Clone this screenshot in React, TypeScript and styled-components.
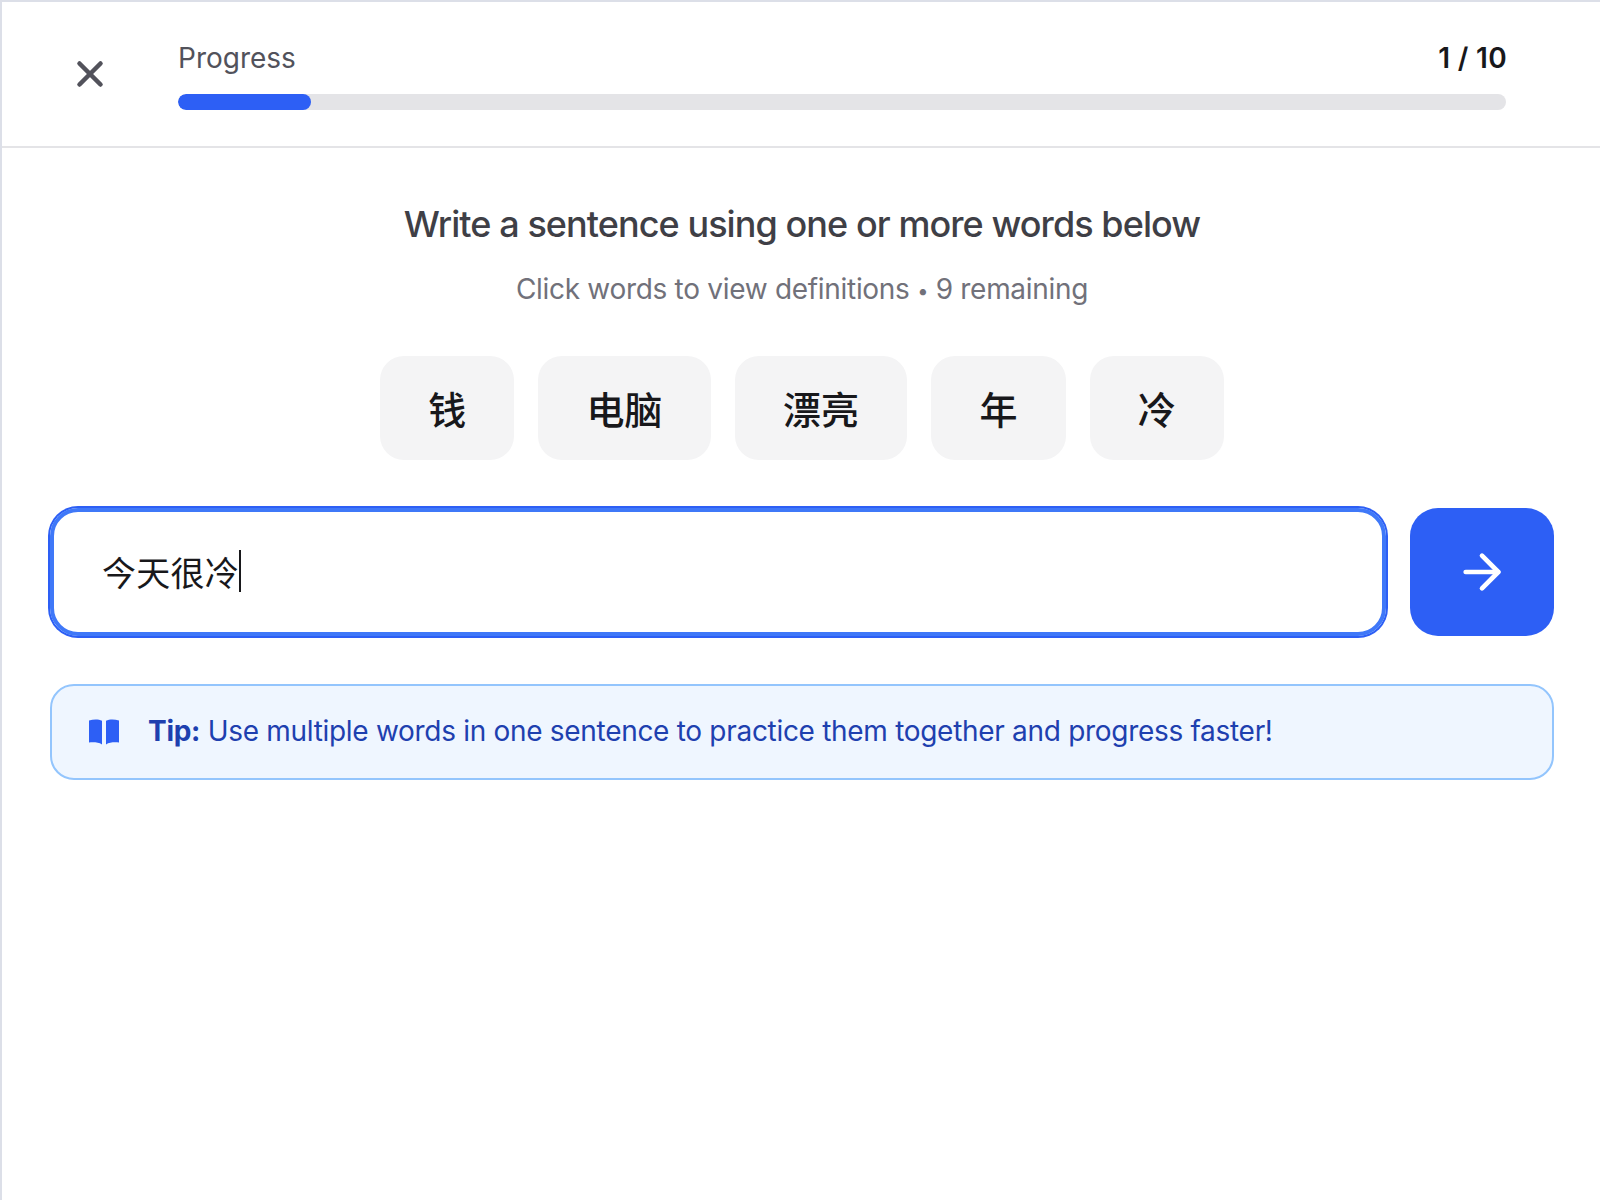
import { ArrowRight, X } from "lucide-react";
import styled, { createGlobalStyle } from "styled-components";

const words = ["钱", "电脑", "漂亮", "年", "冷"];

export default function App() {
    return (
        <Page>
            <GlobalStyle />
            <Header>
                <CloseButton aria-label="Close">
                    <X size={42} strokeWidth={2.6} />
                </CloseButton>
                <ProgressBlock>
                    <ProgressRow>
                        <ProgressLabel>Progress</ProgressLabel>
                        <ProgressCount>1 / 10</ProgressCount>
                    </ProgressRow>
                    <Track>
                        <Fill style={{ width: `${(1 / 10) * 100}%` }} />
                    </Track>
                </ProgressBlock>
            </Header>
            <Main>
                <Title>Write a sentence using one or more words below</Title>
                <Subtitle>Click words to view definitions <Dot>•</Dot> 9 remaining</Subtitle>
                <Chips>
                    {words.map((word) => (
                        <Chip key={word}>{word}</Chip>
                    ))}
                </Chips>
                <InputRow>
                    <Field>
                        今天很冷
                        <Caret />
                    </Field>
                    <SubmitButton aria-label="Submit">
                        <ArrowRight size={56} strokeWidth={2} />
                    </SubmitButton>
                </InputRow>
                <TipBox>
                    <BookIcon viewBox="0 0 30 26">
                        <path d="M0 1.6C4.5 .2 9.5 .2 13 1.8V25.4C9.5 23.4 4.5 23 0 23.6Z" />
                        <path d="M30 1.6C25.5 .2 20.5 .2 17 1.8V25.4C20.5 23.4 25.5 23 30 23.6Z" />
                    </BookIcon>
                    <TipText>
                        <strong>Tip:</strong> Use multiple words in one sentence to practice them together and progress faster!
                    </TipText>
                </TipBox>
            </Main>
        </Page>
    );
}

const GlobalStyle = createGlobalStyle`
body {
    margin: 0;
    background: #fff;
    font-family: Inter, "Noto Sans CJK SC", sans-serif;
}
`

const Page = styled.div`
box-sizing: border-box;
min-height: 1200px;
border-top: 2px solid #dcdfe8;
border-left: 2px solid #dcdfe8;
`

const Header = styled.header`
display: flex;
align-items: center;
padding: 36px 94px 36px 56px;
border-bottom: 2px solid #e4e4e7;
`

const CloseButton = styled.button`
display: flex;
align-items: center;
justify-content: center;
width: 64px;
height: 64px;
margin-right: 56px;
padding: 0;
border: none;
background: none;
color: #52525b;
`

const ProgressBlock = styled.div`
flex: 1;
display: flex;
flex-direction: column;
gap: 16px;
`

const ProgressRow = styled.div`
display: flex;
justify-content: space-between;
padding-top: 1px;
line-height: 39px;
font-size: 28px;
`

const ProgressLabel = styled.span`
color: #52525b;
`

const ProgressCount = styled.span`
margin-right: -1px;
color: #18181b;
font-weight: 600;
letter-spacing: 0.3px;
`

const Track = styled.div`
height: 16px;
border-radius: 8px;
background: #e4e4e7;
overflow: hidden;
`

const Fill = styled.div`
height: 100%;
border-radius: 8px;
background: #2d5ff5;
`

const Main = styled.main`
display: flex;
flex-direction: column;
align-items: center;
padding: 48px 46px 0 48px;
`

const Title = styled.h1`
margin: 0;
color: #3f3f46;
font-size: 36px;
font-weight: 500;
letter-spacing: -0.93px;
line-height: 56px;
`

const Subtitle = styled.p`
margin: 16px 0 0;
padding-top: 1px;
color: #71717a;
font-size: 28px;
letter-spacing: -0.3px;
line-height: 40px;
`

const Dot = styled.span`
font-size: 20px;
line-height: 0;
vertical-align: 1px;
`

const Chips = styled.div`
display: flex;
gap: 24px;
margin-top: 47px;
`

const Chip = styled.button`
height: 104px;
padding: 0 48.2px 2px;
border: none;
border-radius: 24px;
background: #f4f4f5;
color: #18181b;
font-family: inherit;
font-size: 38px;
font-weight: 500;
`

const InputRow = styled.div`
align-self: stretch;
display: flex;
gap: 24px;
margin-top: 48px;
`

const Field = styled.div`
flex: 1;
box-sizing: border-box;
display: flex;
align-items: center;
height: 128px;
padding: 0 48px 2px;
border: 4px solid #3f78f8;
border-radius: 28px;
box-shadow: 0 0 0 2px #2d5ff5;
color: #18181b;
font-size: 34px;
letter-spacing: 0.25px;
`

const Caret = styled.span`
width: 2px;
height: 42px;
background: #18181b;
`

const SubmitButton = styled.button`
display: flex;
align-items: center;
justify-content: center;
width: 144px;
height: 128px;
padding: 0;
border: none;
border-radius: 28px;
background: #2d5ff5;
color: #fff;
`

const TipBox = styled.div`
align-self: stretch;
box-sizing: border-box;
display: flex;
align-items: center;
gap: 29px;
height: 96px;
margin-top: 48px;
padding: 0 37px;
border: 2px solid #93c5fd;
border-radius: 24px;
background: #eff6ff;
`

const BookIcon = styled.svg`
flex: none;
width: 30px;
height: 26px;
fill: #2d5ff5;
`

const TipText = styled.p`
margin: 0 0 2px;
color: #1e40af;
font-size: 28px;
letter-spacing: -0.3px;
line-height: 40px;
`
